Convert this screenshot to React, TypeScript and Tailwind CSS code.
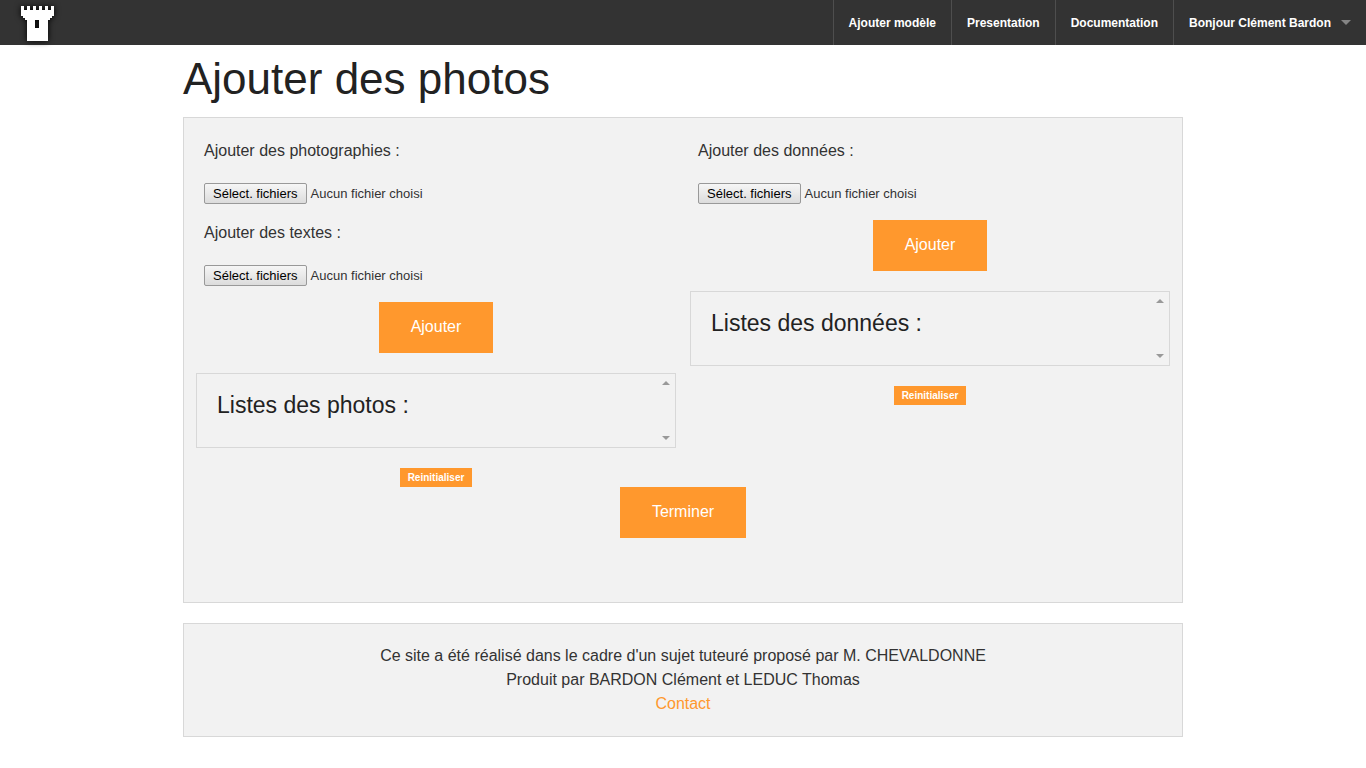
import React from 'react';

const navLinks = ['Ajouter modèle', 'Presentation', 'Documentation'];

function TowerLogo() {
  return (
    <svg width="36" height="39" viewBox="0 0 36 39" aria-hidden="true" shapeRendering="crispEdges" className="drop-shadow-[0_0_3px_#000]">
      <path
        fill="#fff"
        fillRule="evenodd"
        d="M1 3h3v4h3v-4h3v4h3v-4h3v4h3v-4h3v4h3v-4h3v4h3v-4h3v10h-2v2h-2v2h-2v21H7V17H5v-2H3v-2H1zM15 17h4v8h-4z"
      />
    </svg>
  );
}

function NavBar() {
  return (
    <nav className="flex h-[45px] items-stretch justify-between bg-[#333] text-xs font-bold text-white">
      <a href="#accueil" aria-label="Accueil" className="flex items-center pl-5">
        <TowerLogo />
      </a>
      <ul className="flex">
        {navLinks.map((label) => (
          <li key={label} className="flex border-l border-[#4e4e4e]">
            <a href="#menu" className="flex items-center px-[15px]">{label}</a>
          </li>
        ))}
        <li className="flex border-l border-[#4e4e4e]">
          <a href="#compte" className="flex items-center gap-[10px] px-[15px]">
            Bonjour Clément Bardon
            <svg width="10" height="5" viewBox="0 0 10 5" aria-hidden="true">
              <path d="M0 0h10L5 5z" fill="#858585" />
            </svg>
          </a>
        </li>
      </ul>
    </nav>
  );
}

function FileField({ id, label }: { id: string; label: string }) {
  return (
    <div className="mb-4 px-2 pt-px">
      <label htmlFor={id} className="block leading-6">{label}</label>
      <label htmlFor={id} className="relative mt-5 flex h-[21px] items-center gap-1 text-[13px]">
        <input id={id} type="file" multiple className="absolute inset-0 w-full opacity-0" />
        <span className="flex h-[21px] items-center rounded-[2px] border border-[#999] bg-linear-to-b from-[#f6f6f6] to-[#dcdcdc] px-2 text-black">
          Sélect. fichiers
        </span>
        <span>Aucun fichier choisi</span>
      </label>
    </div>
  );
}

function LargeButton({ children }: { children: React.ReactNode }) {
  return (
    <button type="button" className="mx-auto flex h-[51px] items-center bg-[#ff982d] px-8 pb-[2px] text-base text-white">
      {children}
    </button>
  );
}

function ListBox({ title }: { title: string }) {
  return (
    <section className="my-5 flex h-[75px] border border-[#d8d8d8]">
      <h4 className="grow pt-[15px] pl-5 text-[23px] leading-8 text-[#222]">{title}</h4>
      <div className="flex w-[18px] flex-col items-center justify-between py-[7px]" aria-hidden="true">
        <svg width="8" height="4" viewBox="0 0 8 4"><path d="M4 0L8 4H0z" fill="#999" /></svg>
        <svg width="8" height="4" viewBox="0 0 8 4"><path d="M0 0h8L4 4z" fill="#999" /></svg>
      </div>
    </section>
  );
}

function ResetButton() {
  return (
    <button type="button" className="mx-auto flex h-[19px] items-center bg-[#ff982d] px-2 text-[10px] font-bold text-white">
      Reinitialiser
    </button>
  );
}

export default function App() {
  return (
    <div className="min-h-screen bg-white font-['Liberation_Sans',Arial,sans-serif] text-base text-[#333]">
      <NavBar />
      <div className="mx-auto max-w-[1000px]">
        <h1 className="mt-[3px] mb-2 text-[44px] leading-[61px] text-[#222]">Ajouter des photos</h1>
        <main className="border border-[#d8d8d8] bg-[#f2f2f2] px-[5px] pt-5 pb-16">
          <div className="grid grid-cols-2">
            <div className="px-[7px]">
              <FileField id="photographies" label="Ajouter des photographies :" />
              <FileField id="textes" label="Ajouter des textes :" />
              <LargeButton>Ajouter</LargeButton>
              <ListBox title="Listes des photos :" />
              <ResetButton />
            </div>
            <div className="px-[7px]">
              <FileField id="donnees" label="Ajouter des données :" />
              <LargeButton>Ajouter</LargeButton>
              <ListBox title="Listes des données :" />
              <ResetButton />
            </div>
          </div>
          <LargeButton>Terminer</LargeButton>
        </main>
        <footer className="mt-5 border border-[#d8d8d8] bg-[#f2f2f2] p-5 text-center leading-6">
          <p>Ce site a été réalisé dans le cadre d'un sujet tuteuré proposé par M. CHEVALDONNE</p>
          <p>Produit par BARDON Clément et LEDUC Thomas</p>
          <a href="#contact" className="text-[#ff982d]">Contact</a>
        </footer>
      </div>
    </div>
  );
}
